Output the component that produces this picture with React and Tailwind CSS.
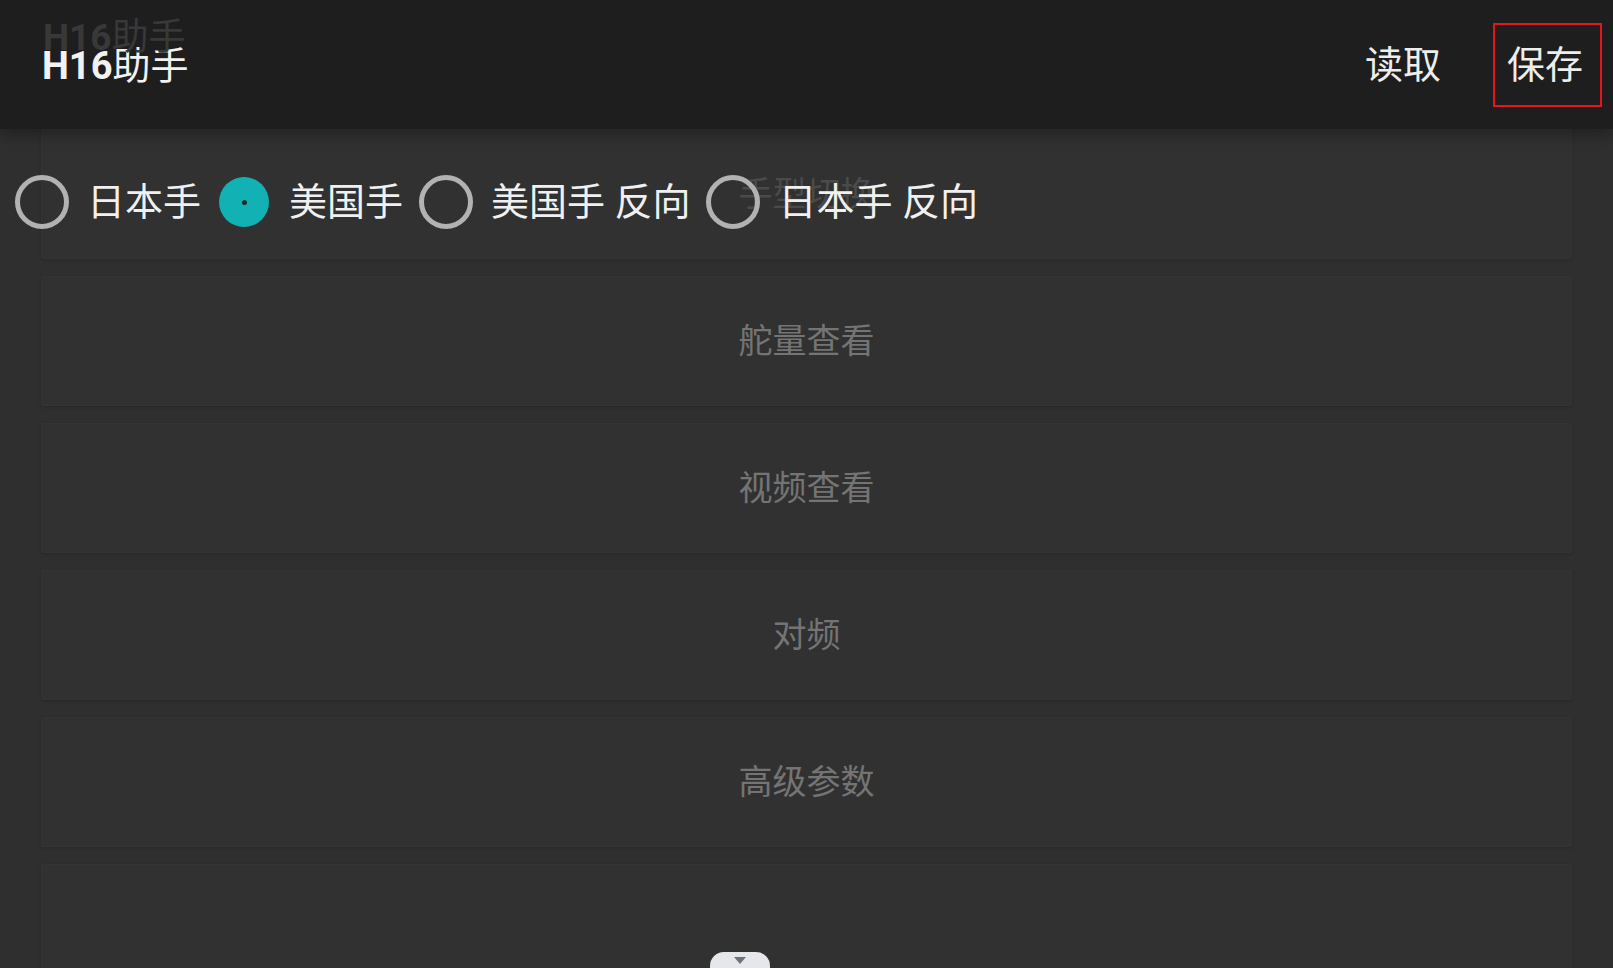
const modes = [
  { label: '日本手', checked: false },
  { label: '美国手', checked: true },
  { label: '美国手 反向', checked: false },
  { label: '日本手 反向', checked: false },
];

const cards = ['手型切换', '舵量查看', '视频查看', '对频', '高级参数', ''];

const Radio = ({ checked }) =>
  checked ? (
    <span className="mx-[2px] flex h-[50px] w-[50px] shrink-0 items-center justify-center rounded-full bg-[#12b1b3]">
      <span className="h-[5px] w-[5px] rounded-full bg-[#1c2a2a]" />
    </span>
  ) : (
    <span className="h-[54px] w-[54px] shrink-0 rounded-full border-[5px] border-[#b2b2b2]" />
  );

const App = () => {
  return (
    <div
      className="relative flex h-screen w-screen flex-col overflow-hidden bg-[#2f2f2f]"
      style={{ fontFamily: 'Roboto, "Noto Sans CJK SC", sans-serif' }}
    >
      {/* top bar */}
      <header className="relative z-10 flex h-[129px] shrink-0 items-center justify-between bg-[#1e1e1e] shadow-[0_6px_14px_rgba(0,0,0,0.3)]">
        <span className="pointer-events-none absolute left-[43px] top-[19px] text-[37px] leading-none text-[#383838]">
          <span className="font-bold">H16</span>助手
        </span>
        <h1 className="pl-[42px] pt-[2px] text-[38px] leading-none text-[#f2f2f2]">
          <span className="font-bold">H16</span>助手
        </h1>
        <div className="flex items-center pr-[11px]">
          <span className="text-[38px] leading-none text-[#ededed]">读取</span>
          <div className="ml-[52px] flex h-[84px] w-[109px] items-center border-2 border-[#e3161e] pl-[12px]">
            <span className="text-[38px] leading-none text-[#ededed]">保存</span>
          </div>
        </div>
      </header>

      <main className="relative flex-1">
        <div className="flex flex-col gap-[17px] px-[41px]">
          {cards.map((c, i) => (
            <div
              key={i}
              className="flex h-[130px] items-center justify-center rounded-[2px] border border-[#343434] bg-[#313131] shadow-[0_1px_3px_rgba(0,0,0,0.18)]"
            >
              <span className={`text-[34px] leading-none ${i === 0 ? 'text-[#4a4a4a]' : 'text-[#747474]'}`}>{c}</span>
            </div>
          ))}
        </div>

        {/* hand mode selector, sits over the first card */}
        <div className="absolute left-[15px] top-[46px] flex items-center">
          {modes.map((m, i) => (
            <label key={i} className="mr-[16px] flex items-center">
              <Radio checked={m.checked} />
              <span className="ml-[18px] whitespace-pre text-[38px] leading-none text-[#f0f0f0]">{m.label}</span>
            </label>
          ))}
        </div>
      </main>

      {/* pull tab */}
      <div className="absolute bottom-0 left-[710px] flex h-[16px] w-[60px] justify-center rounded-t-[14px] bg-[#e6e7eb]">
        <svg width="12" height="7" viewBox="0 0 12 7" className="mt-[5px]">
          <path d="M0 0h12L6 7z" fill="#6b7280" />
        </svg>
      </div>
    </div>
  );
};

export default App;
